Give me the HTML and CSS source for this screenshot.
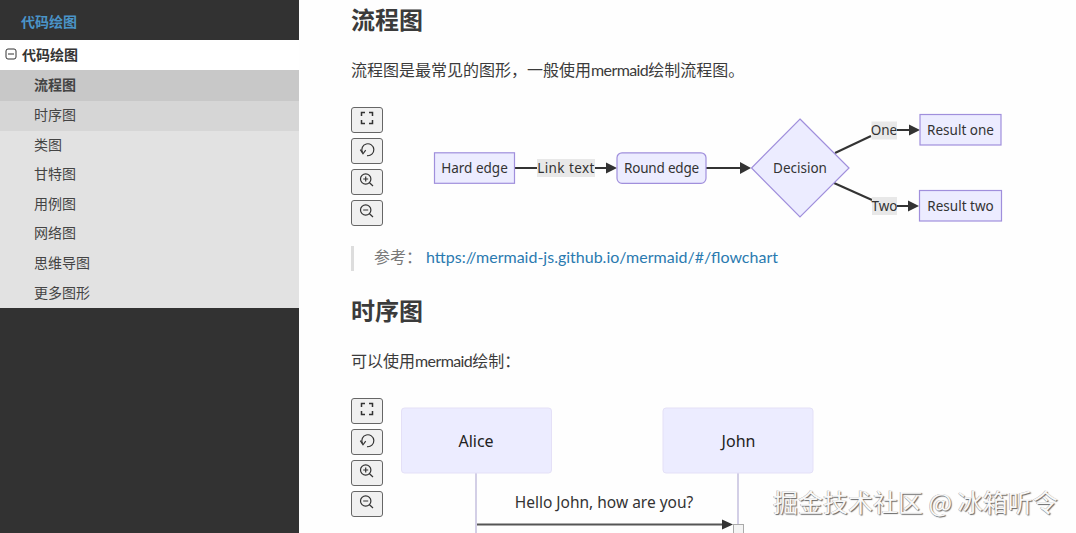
FILE: index.html
```html
<!DOCTYPE html>
<html lang="zh">
<head>
<meta charset="utf-8">
<title>代码绘图</title>
<link rel="stylesheet" href="styles.css">
</head>
<body>
<aside class="sidebar">
  <div class="brand">代码绘图</div>
  <div class="tree-root">
    <svg class="tree-icon" viewBox="0 0 12 12" width="12" height="12"><rect x="1" y="1" width="10" height="10" rx="2" fill="none" stroke="#333" stroke-width="1"/><path d="M3 6h6" stroke="#333" stroke-width="1"/></svg>
    <span>代码绘图</span>
  </div>
  <ul class="tree">
    <li class="item active">流程图</li>
    <li class="item hover">时序图</li>
    <li class="item">类图</li>
    <li class="item">甘特图</li>
    <li class="item">用例图</li>
    <li class="item">网络图</li>
    <li class="item">思维导图</li>
    <li class="item">更多图形</li>
  </ul>
</aside>
<main class="content">
  <h2 class="title first">流程图</h2>
  <p class="para">流程图是最常见的图形，一般使用<span class="latin">mermaid</span>绘制流程图。</p>
  <div class="diagram flow">
    <div class="tools">
      <button class="tool"><svg viewBox="0 0 16 16" width="16" height="16"><path d="M2.500 6V2.500H6M10 2.500H13.500V6M13.500 10V13.500H10M6 13.500H2.500V10" fill="none" stroke="#333" stroke-width="1.500"/></svg></button>
      <button class="tool"><svg viewBox="0 0 16 16" width="16" height="16"><path d="M3.500 11.500A6 6 0 1 1 8 14.700" fill="none" stroke="#333" stroke-width="1.200"/><path d="M1.300 8.700L4 12.800L6.700 9.200" fill="none" stroke="#333" stroke-width="1.200"/></svg></button>
      <button class="tool"><svg viewBox="0 0 16 16" width="16" height="16"><circle cx="6.700" cy="7" r="5.200" fill="none" stroke="#333" stroke-width="1.200"/><path d="M4.200 7h5M6.700 4.500v5M10.500 10.700L14 14" fill="none" stroke="#333" stroke-width="1.200"/></svg></button>
      <button class="tool"><svg viewBox="0 0 16 16" width="16" height="16"><circle cx="6.700" cy="7" r="5.200" fill="none" stroke="#333" stroke-width="1.200"/><path d="M4.200 7h5M10.500 10.700L14 14" fill="none" stroke="#333" stroke-width="1.200"/></svg></button>
    </div>
    <svg class="chart" viewBox="383 107 669 119" width="669" height="119">
      <g class="edge">
        <path d="M514 168H537M595 168H607"/>
        <path d="M706 168H741"/>
        <path d="M835 153L871 136"/>
        <path d="M897 130H910"/>
        <path d="M834 183L872 200"/>
        <path d="M897 206H909"/>
      </g>
      <g class="head">
        <path d="M606 162.500L617 168L606 173.500Z"/>
        <path d="M740 162L751 168L740 174Z"/>
        <path d="M909 124.500L920 130L909 135.500Z"/>
        <path d="M908 200.500L919 206L908 211.500Z"/>
      </g>
      <rect class="label-bg" x="537" y="159" width="58" height="18"/>
      <rect class="label-bg" x="871.500" y="121.500" width="25.500" height="18"/>
      <rect class="label-bg" x="872" y="197" width="25" height="18"/>
      <rect class="node" x="434.500" y="152.800" width="80" height="30.500"/>
      <rect class="node" x="617" y="152.800" width="89" height="30.500" rx="5"/>
      <path class="node" d="M800 119L849 168L800 217L751.500 168Z"/>
      <rect class="node" x="920" y="114.500" width="81" height="30.500"/>
      <rect class="node" x="919.500" y="190.500" width="82" height="30.500"/>
      <text class="t" x="474.500" y="173">Hard edge</text>
      <text class="t wide" x="566" y="173">Link text</text>
      <text class="t tight" x="661.500" y="173">Round edge</text>
      <text class="t" x="800" y="173">Decision</text>
      <text class="t" x="884" y="135">One</text>
      <text class="t" x="884.500" y="211">Two</text>
      <text class="t" x="960.500" y="135">Result one</text>
      <text class="t" x="960.500" y="211">Result two</text>
    </svg>
  </div>
  <blockquote class="quote"><span class="quote-label">参考：</span><a class="link" href="#">https://mermaid-js.github.io/mermaid/#/flowchart</a></blockquote>
  <h2 class="title">时序图</h2>
  <p class="para">可以使用<span class="latin">mermaid</span>绘制：</p>
  <div class="diagram seq">
    <div class="tools">
      <button class="tool"><svg viewBox="0 0 16 16" width="16" height="16"><path d="M2.500 6V2.500H6M10 2.500H13.500V6M13.500 10V13.500H10M6 13.500H2.500V10" fill="none" stroke="#333" stroke-width="1.500"/></svg></button>
      <button class="tool"><svg viewBox="0 0 16 16" width="16" height="16"><path d="M3.500 11.500A6 6 0 1 1 8 14.700" fill="none" stroke="#333" stroke-width="1.200"/><path d="M1.300 8.700L4 12.800L6.700 9.200" fill="none" stroke="#333" stroke-width="1.200"/></svg></button>
      <button class="tool"><svg viewBox="0 0 16 16" width="16" height="16"><circle cx="6.700" cy="7" r="5.200" fill="none" stroke="#333" stroke-width="1.200"/><path d="M4.200 7h5M6.700 4.500v5M10.500 10.700L14 14" fill="none" stroke="#333" stroke-width="1.200"/></svg></button>
      <button class="tool"><svg viewBox="0 0 16 16" width="16" height="16"><circle cx="6.700" cy="7" r="5.200" fill="none" stroke="#333" stroke-width="1.200"/><path d="M4.200 7h5M10.500 10.700L14 14" fill="none" stroke="#333" stroke-width="1.200"/></svg></button>
    </div>
    <svg class="chart" viewBox="383 398 669 135" width="669" height="135">
      <path class="life" d="M476 473V533M738 473V533"/>
      <rect class="actor" x="401.500" y="408" width="150" height="65" rx="3"/>
      <rect class="actor" x="663" y="408" width="150" height="65" rx="3"/>
      <text class="a" x="476" y="447">Alice</text>
      <text class="a" x="738.500" y="447">John</text>
      <text class="m" x="604" y="508">Hello John, how are you?</text>
      <path class="msg" d="M477 524.500H724"/>
      <path class="msg-head" d="M722 519.500L733 524.500L722 529.500Z"/>
      <rect class="act" x="733.500" y="524.500" width="10" height="12"/>
    </svg>
  </div>
</main>
<div class="mark">掘金技术社区 @ 冰箱听令</div>
</body>
</html>
```
FILE: styles.css
```css
html, body {
  margin: 0;
  height: 533px;
  overflow: hidden;
}
body {
  display: flex;
  background: #fefefe;
  color: #333;
  font-family: Lato, "Noto Sans CJK SC", sans-serif;
  font-size: 16px;
}
.sidebar {
  width: 299px;
  flex: none;
  background: #323232;
  font-size: 14px;
}
.brand {
  height: 40px;
  line-height: 44px;
  padding-left: 21px;
  color: #4a94c8;
  font-weight: 700;
  font-size: 14px;
}
.tree-root {
  height: 30px;
  display: flex;
  align-items: center;
  gap: 5px;
  padding-left: 5px;
  padding-bottom: 2px;
  box-sizing: border-box;
  background: #fff;
  font-weight: 700;
  font-size: 14px;
  color: #333;
}
.tree-icon { flex: none; }
.tree {
  list-style: none;
  margin: 0;
  padding: 0;
  background: #e2e2e2;
  color: #444;
}
.item {
  height: 29.600px;
  line-height: 27.600px;
  padding-left: 34px;
}
.item.active {
  background: #c8c8c8;
  font-weight: 700;
  height: 31px;
  line-height: 29px;
}
.item.hover {
  background: #d6d6d6;
}
.content {
  flex: 1;
  padding-left: 52px;
  min-width: 0;
}
.title {
  margin: 0;
  font-size: 24px;
  line-height: 36px;
  font-weight: 700;
  color: #3b3b3b;
}
.title.first {
  margin-top: 2px;
}
.para {
  margin: 14px 0 0;
  line-height: 36px;
  color: #3b3b3b;
}
.latin {
  letter-spacing: -0.6px;
}
.diagram {
  display: flex;
}
.flow {
  margin-top: 19px;
}
.seq {
  margin-top: 19px;
}
.tools {
  display: flex;
  flex-direction: column;
  gap: 5px;
  width: 32px;
  flex: none;
}
.tool {
  width: 32px;
  height: 26px;
  padding: 0 0 4px;
  display: flex;
  align-items: center;
  justify-content: center;
  background: #f0f0f0;
  border: 1px solid #666;
  border-radius: 3px;
}
.chart {
  flex: none;
  display: block;
}
.edge path {
  fill: none;
  stroke: #333;
  stroke-width: 2;
}
.head path {
  fill: #333;
}
.label-bg {
  fill: #e8e8e8;
}
.node {
  fill: #ececff;
  stroke: #a08fdc;
  stroke-width: 1.200;
}
.t {
  font-family: "Noto Sans", sans-serif;
  font-size: 13.500px;
  fill: #333;
  text-anchor: middle;
}
.t.wide {
  letter-spacing: 0.4px;
}
.t.tight {
  letter-spacing: -0.2px;
}
.quote {
  margin: 20px 0 0;
  border-left: 3px solid #ddd;
  padding-left: 20px;
  height: 25px;
  line-height: 22px;
  display: flex;
}
.quote-label {
  color: #777;
  width: 52px;
}
.link {
  color: #2a7ab0;
  text-decoration: none;
}
.content > .title:not(.first) {
  margin-top: 22px;
}
.life {
  fill: none;
  stroke: #d3cfe6;
  stroke-width: 2;
}
.actor {
  fill: #ececff;
  stroke: #e4e0f7;
  stroke-width: 1;
}
.a {
  font-family: "Noto Sans", sans-serif;
  font-size: 16px;
  fill: #222;
  text-anchor: middle;
}
.m {
  font-family: "Noto Sans", sans-serif;
  font-size: 15.500px;
  fill: #333;
  text-anchor: middle;
}
.msg {
  fill: none;
  stroke: #555;
  stroke-width: 2;
}
.msg-head {
  fill: #333;
}
.act {
  fill: #f4f4f4;
  stroke: #aaa;
  stroke-width: 1;
}
.mark {
  position: absolute;
  left: 773px;
  top: 483px;
  font-family: "Noto Sans CJK SC", sans-serif;
  font-size: 25px;
  line-height: 36px;
  color: #f8f8f8;
  white-space: nowrap;
  text-shadow: 1px 1px 1px #666, -0.5px -0.5px 0 #aaa;
}
```
